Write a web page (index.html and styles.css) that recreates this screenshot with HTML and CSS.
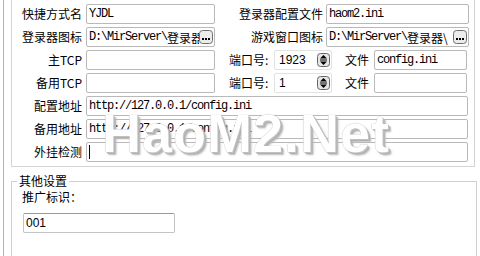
FILE: index.html
```html
<!DOCTYPE html>
<html>
<head>
<meta charset="utf-8">
<link rel="stylesheet" href="styles.css">
</head>
<body>
<div class="window">
  <div class="panel">
    <div class="row">
      <div class="lbl">快捷方式名</div>
      <div class="field w-left"><span class="mono">YJDL</span></div>
      <div class="lbl lbl2">登录器配置文件</div>
      <div class="field w-right"><span class="mono">haom2.ini</span></div>
    </div>
    <div class="row">
      <div class="lbl">登录器图标</div>
      <div class="field w-left"><span class="mono">D:\MirServer\</span><span class="cjk">登录器</span>
        <span class="dots"><svg width="14" height="14" viewBox="0 0 14 14"><rect x="0.5" y="0.5" width="13" height="13" rx="3" fill="#ececec" stroke="#6e6e6e"/><rect x="3" y="8" width="2" height="2" fill="#000"/><rect x="6" y="8" width="2" height="2" fill="#000"/><rect x="9" y="8" width="2" height="2" fill="#000"/></svg></span>
      </div>
      <div class="lbl lbl2">游戏窗口图标</div>
      <div class="field w-right"><span class="mono">D:\MirServer\</span><span class="cjk">登录器\</span>
        <span class="dots"><svg width="14" height="14" viewBox="0 0 14 14"><rect x="0.5" y="0.5" width="13" height="13" rx="3" fill="#ececec" stroke="#6e6e6e"/><rect x="3" y="8" width="2" height="2" fill="#000"/><rect x="6" y="8" width="2" height="2" fill="#000"/><rect x="9" y="8" width="2" height="2" fill="#000"/></svg></span>
      </div>
    </div>
    <div class="row">
      <div class="lbl">主TCP</div>
      <div class="field w-left"></div>
      <div class="lbl port">端口号:</div>
      <div class="field spin"><span class="num">1923</span>
        <span class="spinbtn"><svg width="13" height="14" viewBox="0 0 13 14"><rect x="0.5" y="0.5" width="12" height="13" rx="3" fill="#e6e6e6" stroke="#666"/><path d="M3 5.5 L6.5 2 L10 5.5Z" fill="#000"/><path d="M3 7h7" stroke="#000" stroke-width="1"/><path d="M3 8.5 L6.5 12 L10 8.5Z" fill="#000"/></svg></span>
      </div>
      <div class="lbl file">文件</div>
      <div class="field w-file"><span class="mono">config.ini</span></div>
    </div>
    <div class="row">
      <div class="lbl">备用TCP</div>
      <div class="field w-left"></div>
      <div class="lbl port">端口号:</div>
      <div class="field spin"><span class="num">1</span>
        <span class="spinbtn"><svg width="13" height="14" viewBox="0 0 13 14"><rect x="0.5" y="0.5" width="12" height="13" rx="3" fill="#e6e6e6" stroke="#666"/><path d="M3 5.5 L6.5 2 L10 5.5Z" fill="#000"/><path d="M3 7h7" stroke="#000" stroke-width="1"/><path d="M3 8.5 L6.5 12 L10 8.5Z" fill="#000"/></svg></span>
      </div>
      <div class="lbl file">文件</div>
      <div class="field w-file"></div>
    </div>
    <div class="row">
      <div class="lbl">配置地址</div>
      <div class="field w-full"><span class="mono">http://127.0.0.1/config.ini</span></div>
    </div>
    <div class="row">
      <div class="lbl">备用地址</div>
      <div class="field w-full"><span class="mono">http://127.0.0.1/config.ini</span></div>
    </div>
    <div class="row">
      <div class="lbl">外挂检测</div>
      <div class="field w-full"><span class="caret"></span></div>
    </div>
  </div>
  <div class="group">
    <div class="legend">其他设置</div>
    <div class="glabel">推广标识：</div>
    <div class="field w-id"><span class="num">001</span></div>
  </div>
  <div class="watermark">HaoM2.Net</div>
</div>
</body>
</html>
```

FILE: styles.css
```css
html, body {
  margin: 0;
  padding: 0;
  background: #ffffff;
}
body {
  width: 480px;
  height: 256px;
  overflow: hidden;
  font-family: "Noto Sans CJK SC", "Liberation Sans", sans-serif;
  font-size: 12px;
  color: #000;
}
.window {
  position: relative;
  margin-left: 3px;
  height: 256px;
  border-left: 1px solid #b4b4b4;
  box-sizing: border-box;
}
.panel {
  margin-left: 7px;
  width: 464px;
  height: 167px;
  box-sizing: border-box;
  border: 1px solid #d4d4d4;
  border-top: none;
  padding-top: 4px;
  display: flex;
  flex-direction: column;
  gap: 3px;
}
.row {
  display: flex;
  align-items: center;
  height: 20px;
}
.lbl {
  width: 70px;
  margin-right: 4px;
  text-align: right;
  white-space: nowrap;
  line-height: 20px;
}
.lbl2 {
  width: 108px;
  margin-right: 3px;
}
.port {
  width: 45px;
  margin: 0 0 0 14px;
  text-align: left;
}
.file {
  width: 29px;
  margin: 0 0 0 13px;
  text-align: left;
}
.field {
  position: relative;
  height: 20px;
  box-sizing: border-box;
  border: 1px solid #b9b9b9;
  border-radius: 2px;
  background: #fff;
  display: flex;
  align-items: center;
  padding-left: 2px;
  overflow: hidden;
  white-space: nowrap;
}
.w-left { width: 129px; }
.w-right { width: 143px; }
.w-file { width: 93px; }
.w-full { width: 382px; }
.spin {
  width: 58px;
  border-color: #e2e2e2;
  padding-left: 4px;
}
.mono {
  font-family: "Liberation Mono", monospace;
  font-size: 12px;
  letter-spacing: -1.2px;
}
.cjk {
  font-family: "Noto Sans CJK SC", sans-serif;
  font-size: 12px;
}
.num {
  font-family: "Liberation Sans", sans-serif;
  font-size: 12px;
}
.dots {
  position: absolute;
  right: 1px;
  top: 2px;
  width: 14px;
  height: 14px;
  background: #fff;
  display: flex;
}
.spinbtn {
  position: absolute;
  right: 1px;
  top: 2px;
  width: 13px;
  height: 14px;
  display: flex;
}
.caret {
  display: inline-block;
  width: 1px;
  height: 14px;
  background: #000;
}
.group {
  position: relative;
  margin: 14px 0 0 7px;
  width: 466px;
  height: 80px;
  box-sizing: border-box;
  border: 1px solid #d0d0d0;
  border-bottom: none;
  padding: 6px 0 0 10px;
}
.legend {
  position: absolute;
  left: 5px;
  top: -10px;
  padding: 0 2px;
  background: #fff;
  line-height: 18px;
}
.glabel {
  line-height: 18px;
}
.w-id {
  margin-top: 7px;
  margin-left: 1px;
  width: 152px;
  height: 20px;
  border-color: #c4c4c4;
  border-top-color: #9a9a9a;
  padding-left: 2px;
}
.watermark {
  position: absolute;
  left: 98px;
  top: 106px;
  font-family: "Liberation Sans", sans-serif;
  font-weight: bold;
  font-size: 54px;
  line-height: 1;
  letter-spacing: 1px;
  color: #ffffff;
  text-shadow: 0 0 1px #9a9a9a, 1px 1px 0 #c4c4c4, 2px 2px 0 #b0b0b0, 3px 3px 2px #bbbbbb;
  white-space: nowrap;
}
```
